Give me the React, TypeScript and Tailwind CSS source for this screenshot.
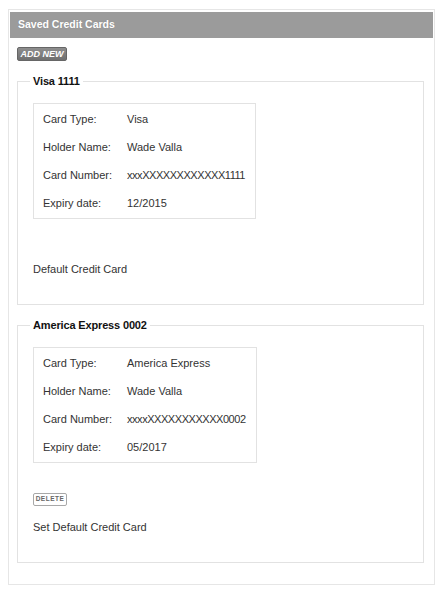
import React from "react";

type Card = {
  title: string;
  type: string;
  holder: string;
  number: string;
  expiry: string;
  isDefault: boolean;
};

const cards: Card[] = [
  { title: "Visa 1111", type: "Visa", holder: "Wade Valla", number: "xxxXXXXXXXXXXXX1111", expiry: "12/2015", isDefault: true },
  { title: "America Express 0002", type: "America Express", holder: "Wade Valla", number: "xxxxXXXXXXXXXXX0002", expiry: "05/2017", isDefault: false },
];

function Row({ label, value, tight }: { label: string; value: string; tight?: boolean }) {
  return (
    <div className="flex h-[28px] items-center leading-[14px]">
      <div className="w-[84px] shrink-0">{label}</div>
      <div className={tight ? "whitespace-nowrap tracking-[-0.45px]" : "whitespace-nowrap"}>{value}</div>
    </div>
  );
}

function CardSet({ card }: { card: Card }) {
  return (
    <fieldset className="mt-[13px] border border-[#e2e2e2] pl-[15px] pr-[15px] pt-[15px] pb-[28px]">
      <legend className="-ml-[3px] px-[3px] text-[11px] font-bold leading-[14px] tracking-[-0.15px] text-[#111]">{card.title}</legend>
      <div className="inline-block border border-[#e2e2e2] py-[1px] pl-[9px] pr-[10px]">
        <Row label="Card Type:" value={card.type} />
        <Row label="Holder Name:" value={card.holder} />
        <Row label="Card Number:" value={card.number} tight />
        <Row label="Expiry date:" value={card.expiry} />
      </div>
      {card.isDefault ? (
        <div className="mt-[43px] leading-[14px]">Default Credit Card</div>
      ) : (
        <>
          <div className="mt-[30px] flex">
            <button className="flex h-[13px] w-[34px] items-center justify-center rounded-[2px] border border-[#a8a8a8] bg-white text-[6.5px] font-bold tracking-[0.5px] text-[#666] leading-none">
              DELETE
            </button>
          </div>
          <div className="mt-[14px] leading-[14px]">Set Default Credit Card</div>
        </>
      )}
    </fieldset>
  );
}

export default function App() {
  return (
    <div className="min-h-[591px] bg-white pl-[8px] pt-[9px] text-[11px] text-[#333]" style={{ fontFamily: '"Liberation Sans", Arial, sans-serif' }}>
      <div className="w-[427px] border border-[#e6e6e6] px-[1px] pt-[2px] pb-[21px]">
        <div className="flex h-[26px] items-center bg-[#9b9b9b] pl-[8px] text-[10.5px] font-bold text-white [text-shadow:0_0_1px_rgba(0,0,0,0.15)]">
          Saved Credit Cards
        </div>
        <div className="pl-[7px] pr-[9px]">
          <div className="mt-[9px] flex">
            <button className="flex h-[14px] w-[50px] items-center justify-center rounded-[2px] border border-[#666] bg-gradient-to-b from-[#8e8e8e] to-[#707070] text-[9px] font-bold italic leading-none text-white">
              ADD NEW
            </button>
          </div>
          {cards.map((c) => (
            <CardSet key={c.title} card={c} />
          ))}
        </div>
      </div>
    </div>
  );
}
